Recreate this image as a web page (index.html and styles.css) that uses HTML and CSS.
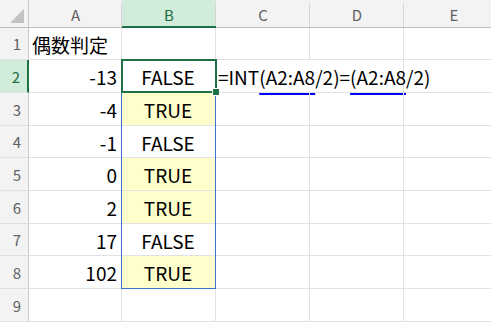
FILE: index.html
```html
<!DOCTYPE html>
<html lang="ja">
<head>
  <meta charset="UTF-8">
  <title>偶数判定</title>
  <link rel="stylesheet" href="styles.css">
</head>
<body>
  <div class="sheet">
    <!-- 見出し行 -->
    <div class="corner"><span class="tri"></span></div>
    <div class="col-head">A</div>
    <div class="col-head active">B</div>
    <div class="col-head">C</div>
    <div class="col-head">D</div>
    <div class="col-head">E</div>

    <!-- 1 -->
    <div class="row-head">1</div>
    <div class="cell">偶数判定</div>
    <div class="cell"></div>
    <div class="cell"></div>
    <div class="cell"></div>
    <div class="cell"></div>

    <!-- 2 -->
    <div class="row-head active">2</div>
    <div class="cell num">-13</div>
    <div class="cell mid">FALSE</div>
    <div class="cell formula">=INT<u>(A2:A8</u>/2)=<u>(A2:A8</u>/2)</div>
    <div class="cell"></div>

    <!-- 3 -->
    <div class="row-head">3</div>
    <div class="cell num">-4</div>
    <div class="cell mid yes">TRUE</div>
    <div class="cell"></div>
    <div class="cell"></div>
    <div class="cell"></div>

    <!-- 4 -->
    <div class="row-head">4</div>
    <div class="cell num">-1</div>
    <div class="cell mid">FALSE</div>
    <div class="cell"></div>
    <div class="cell"></div>
    <div class="cell"></div>

    <!-- 5 -->
    <div class="row-head">5</div>
    <div class="cell num">0</div>
    <div class="cell mid yes">TRUE</div>
    <div class="cell"></div>
    <div class="cell"></div>
    <div class="cell"></div>

    <!-- 6 -->
    <div class="row-head">6</div>
    <div class="cell num">2</div>
    <div class="cell mid yes">TRUE</div>
    <div class="cell"></div>
    <div class="cell"></div>
    <div class="cell"></div>

    <!-- 7 -->
    <div class="row-head">7</div>
    <div class="cell num">17</div>
    <div class="cell mid">FALSE</div>
    <div class="cell"></div>
    <div class="cell"></div>
    <div class="cell"></div>

    <!-- 8 -->
    <div class="row-head">8</div>
    <div class="cell num">102</div>
    <div class="cell mid yes">TRUE</div>
    <div class="cell"></div>
    <div class="cell"></div>
    <div class="cell"></div>

    <!-- 9 -->
    <div class="row-head">9</div>
    <div class="cell"></div>
    <div class="cell"></div>
    <div class="cell"></div>
    <div class="cell"></div>
    <div class="cell"></div>

    <!-- 選択セルとスピル範囲の枠 -->
    <div class="spill"></div>
    <div class="selected"><span class="handle"></span></div>
  </div>
</body>
</html>
```

FILE: styles.css
```css
body {
  margin: 0;
  background: #fff;
  font-family: "Noto Sans CJK JP", "Noto Sans", sans-serif;
  overflow: hidden;
}

.sheet {
  display: grid;
  grid-template-columns: 29px 93px 94px 94px 94px 100px;
  grid-template-rows: 28px 32px 33px 33px 32px 33px 33px 32px 33px 33px;
  position: relative;
}

.corner,
.col-head,
.row-head {
  background: #f3f3f3;
  color: #616161;
  font-size: 15px;
  box-sizing: border-box;
}

.corner {
  border-right: 1px solid #c8c8c8;
  border-bottom: 1px solid #bdbdbd;
  position: relative;
}

.tri {
  position: absolute;
  right: 4px;
  bottom: 4px;
  width: 0;
  height: 0;
  border-left: 14px solid transparent;
  border-bottom: 14px solid #c2c2c2;
}

.col-head {
  display: flex;
  justify-content: center;
  align-items: center;
  padding-top: 2px;
  border-bottom: 1px solid #bdbdbd;
  position: relative;
}

/* 見出しの区切り線は上端まで届かない */
.col-head::after {
  content: "";
  position: absolute;
  right: 0;
  top: 3px;
  bottom: 0;
  width: 1px;
  background: #d6d6d6;
}

.col-head.active {
  background: #d2ecdc;
  color: #1e6b3f;
  border-bottom: 2px solid #1e7145;
}

.row-head {
  display: flex;
  justify-content: flex-end;
  align-items: center;
  padding-right: 7px;
  border-right: 1px solid #c8c8c8;
  border-bottom: 1px solid #e1e1e1;
}

.row-head.active {
  background: #d2ecdc;
  color: #1e6b3f;
  border-right: 2px solid #1e7145;
}

.cell {
  box-sizing: border-box;
  border-right: 1px solid #e1e1e1;
  border-bottom: 1px solid #e1e1e1;
  font-size: 19px;
  color: #000;
  display: flex;
  align-items: center;
  padding: 1px 4px 0 3px;
  white-space: nowrap;
}

.num {
  justify-content: flex-end;
}

.mid {
  justify-content: center;
}

.yes {
  background: #ffffcc;
}

.formula {
  grid-column: span 2;
  overflow: visible;
  padding-left: 2px;
}

.formula u {
  text-decoration: underline;
  text-decoration-color: #0000ff;
  text-decoration-thickness: 2px;
  text-underline-offset: 8px;
}

/* 枠はグリッド領域に重ねるだけで、セルの配置には加わらない */
.spill,
.selected {
  position: absolute;
  pointer-events: none;
}

/* 数式が参照しているスピル範囲 */
.spill {
  grid-column: 3 / 4;
  grid-row: 4 / 10;
  top: -1px;
  left: -1px;
  right: 0;
  bottom: 0;
  border: 1px solid #3f75d1;
}

.selected {
  grid-column: 3 / 4;
  grid-row: 3 / 4;
  top: -1px;
  left: -1px;
  right: -1px;
  bottom: 0;
  border: 2px solid #1e7145;
}

.handle {
  position: absolute;
  right: -5px;
  bottom: -5px;
  width: 6px;
  height: 6px;
  background: #1e7145;
  border: 1px solid #fff;
}
```
